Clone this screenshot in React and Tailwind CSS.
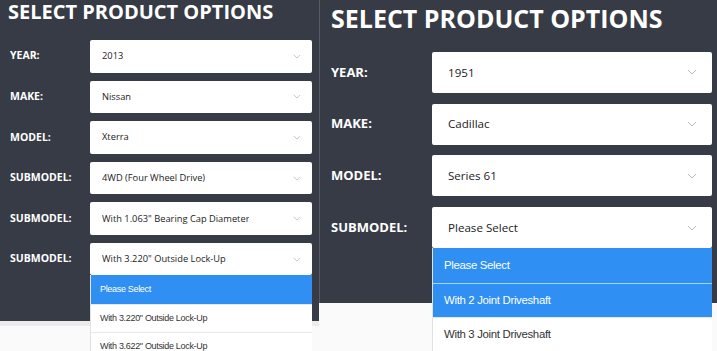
import React from 'react';

const leftRows = [
  { label: 'YEAR:', value: '2013' },
  { label: 'MAKE:', value: 'Nissan' },
  { label: 'MODEL:', value: 'Xterra' },
  { label: 'SUBMODEL:', value: '4WD (Four Wheel Drive)' },
  { label: 'SUBMODEL:', value: 'With 1.063" Bearing Cap Diameter' },
  {
    label: 'SUBMODEL:',
    value: 'With 3.220" Outside Lock-Up',
    options: ['Please Select', 'With 3.220" Outside Lock-Up', 'With 3.622" Outside Lock-Up'],
    active: [0],
  },
];

const rightRows = [
  { label: 'YEAR:', value: '1951' },
  { label: 'MAKE:', value: 'Cadillac' },
  { label: 'MODEL:', value: 'Series 61' },
  {
    label: 'SUBMODEL:',
    value: 'Please Select',
    options: ['Please Select', 'With 2 Joint Driveshaft', 'With 3 Joint Driveshaft'],
    active: [0, 1],
  },
];

const small = {
  panel: 'w-[319px] h-[321px] pl-[8px] pt-0',
  title: 'text-[20px] leading-[24px]',
  list: 'mt-[16px] gap-[8.1px]',
  label: 'w-[82px] pl-[2px] text-[10.5px]',
  select: 'w-[222px] h-[32.5px] pl-[12px] pr-[11px] text-[9.3px]',
  chevron: 'w-[8px] h-[5px]',
  item: 'h-[28.3px] pl-[9px] text-[9px]',
};

const large = {
  panel: 'flex-1 h-[303px] pl-[11px] pt-[2.6px]',
  title: 'text-[25px] leading-[31px]',
  list: 'mt-[18.4px] gap-[10.7px]',
  label: 'w-[101px] text-[13px]',
  select: 'w-[280px] h-[41px] pl-[16px] pr-[15px] text-[11.6px]',
  chevron: 'w-[10px] h-[6px]',
  item: 'h-[34.5px] pl-[11px] text-[11.4px]',
};

function Chevron({ className }) {
  return (
    <svg viewBox="0 0 10 6" className={className} fill="none">
      <polyline points="1,1 5,5 9,1" stroke="#b9b9b9" strokeWidth="1" />
    </svg>
  );
}

function Panel({ rows, s }) {
  return (
    <div className={`bg-[#363b45] shrink-0 ${s.panel}`}>
      <h2 className={`font-['Open_Sans',sans-serif] font-bold text-white whitespace-nowrap ${s.title}`}>
        SELECT PRODUCT OPTIONS
      </h2>
      <div className={`flex flex-col ${s.list}`}>
        {rows.map((row, i) => (
          <div key={i} className="flex items-center">
            <span className={`font-['Open_Sans',sans-serif] font-bold text-white shrink-0 ${s.label}`}>
              {row.label}
            </span>
            <div className="relative">
              <div className={`flex items-center justify-between bg-white rounded-[2px] font-['Open_Sans',sans-serif] font-medium text-[#222] ${s.select}`}>
                <span className="truncate">{row.value}</span>
                <Chevron className={s.chevron} />
              </div>
              {/* open dropdown */}
              {row.options && (
                <ul className="absolute left-0 right-0 top-full z-10 bg-white border-l border-[#e2e2e2] font-['Liberation_Sans',Arial,sans-serif] tracking-[-0.02em]">
                  {row.options.map((opt, j) => {
                    const on = row.active.includes(j);
                    return (
                      <li
                        key={j}
                        className={`flex items-center ${s.item} ${on ? 'bg-[#2f8ff2] text-white' : 'text-[#333] bg-white'} ${j > 0 ? (on ? 'border-t border-[#a9d0f8]' : 'border-t border-[#e8e8e8]') : ''}`}
                      >
                        {opt}
                      </li>
                    );
                  })}
                </ul>
              )}
            </div>
          </div>
        ))}
      </div>
    </div>
  );
}

export default function App() {
  return (
    <div className="w-[717px] h-[351px] overflow-hidden bg-[#fafafa]">
      <div className="flex items-start">
        <div className="shrink-0">
          <Panel rows={leftRows} s={small} />
          <div className="h-[5px] bg-[#ececec]" />
        </div>
        <div className="w-px h-[303px] bg-[#555b65] shrink-0" />
        <Panel rows={rightRows} s={large} />
      </div>
    </div>
  );
}
